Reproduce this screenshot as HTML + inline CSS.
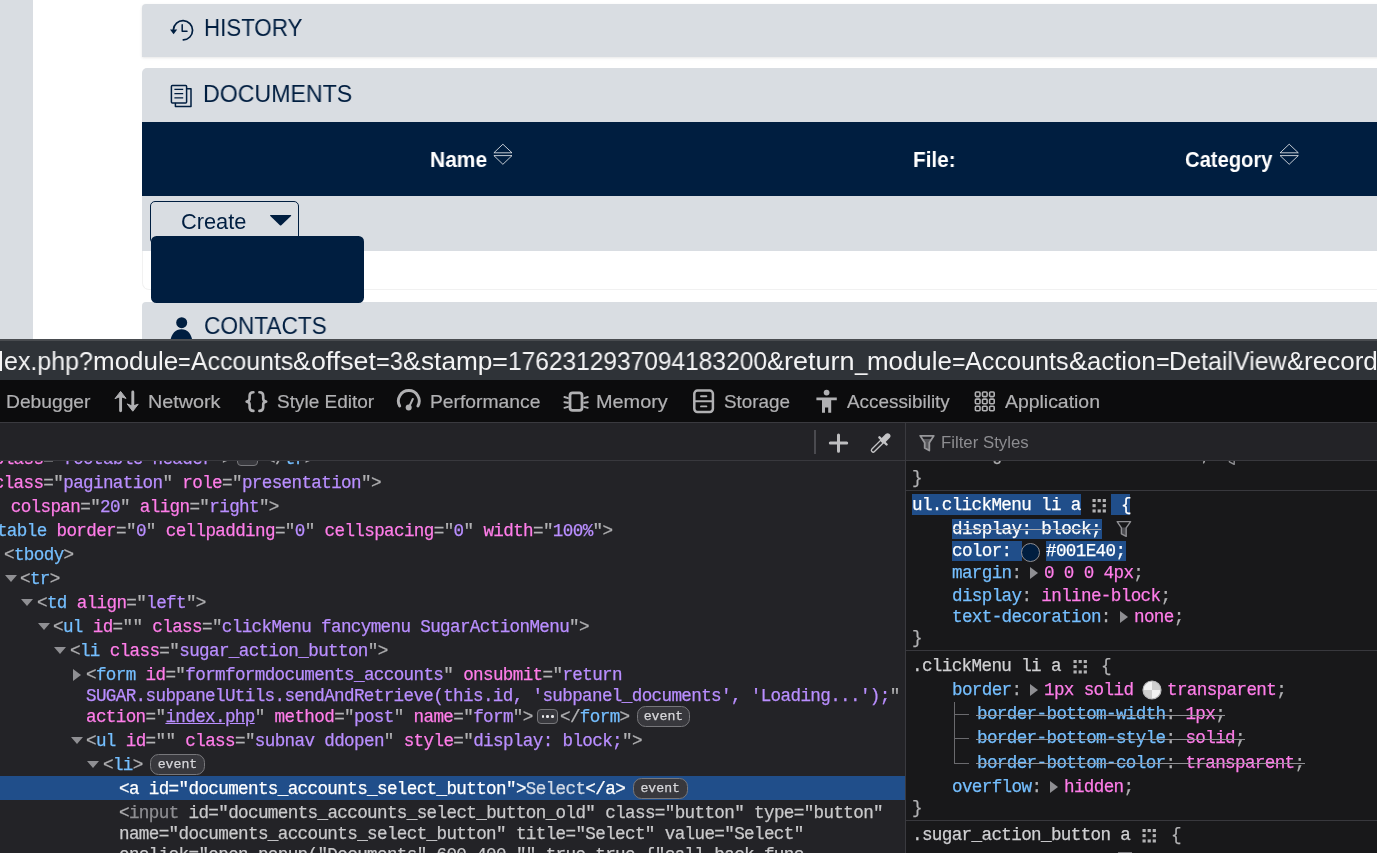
<!DOCTYPE html>
<html>
<head>
<meta charset="utf-8">
<title>Accounts - DevTools</title>
<style>
html,body{margin:0;padding:0;}
body{width:1377px;height:853px;overflow:hidden;position:relative;background:#fff;font-family:"Liberation Sans",sans-serif;}
.abs{position:absolute;}
svg{position:absolute;overflow:visible;}
#page{position:absolute;left:0;top:0;width:1377px;height:339px;background:#fff;overflow:hidden;}
#strip{position:absolute;left:0;top:0;width:33px;height:339px;background:#d9dde2;}
.panel{position:absolute;left:142px;width:1240px;background:#d9dde2;}
.tx{position:absolute;white-space:nowrap;transform-origin:0 0;will-change:transform;}
.ptitle{color:#001e40;font-size:23.5px;line-height:28px;}
.th{color:#fff;font-weight:bold;font-size:22px;line-height:26px;}
#dt{position:absolute;left:0;top:339px;width:1377px;height:514px;background:#232327;overflow:hidden;}
#url{position:absolute;left:0;top:0;width:1377px;height:41px;background:#2f3338;overflow:hidden;box-sizing:border-box;border-top:2px solid #494c50;}
#url .tx{top:4.6px;color:#f4f4f5;font-size:25.2px;line-height:30px;}
#tabs{position:absolute;left:0;top:41px;width:1377px;height:42px;background:#0c0c0d;border-bottom:1.5px solid #3a3a3f;}
#tabs .tx{top:10.6px;color:#b1b1b3;font-size:18.6px;line-height:22px;-webkit-text-stroke:0.2px #b1b1b3;}
#tb{position:absolute;left:0;top:84.5px;width:1377px;height:36.5px;background:#232327;border-bottom:1px solid #38383d;}
#mk{position:absolute;left:0;top:122px;width:905px;height:392px;background:#232327;overflow:hidden;}
#rv{position:absolute;left:906px;top:122px;width:471px;height:392px;background:#18181a;overflow:hidden;}
#mk,#rv{font-family:"Liberation Mono",monospace;font-size:17.6px;line-height:21px;color:#b1b1b3;white-space:pre;letter-spacing:-0.636px;-webkit-text-stroke:0.25px currentColor;}
#split{position:absolute;left:904.6px;top:84px;width:1.6px;height:431px;background:#3a3a3f;}
.l{position:absolute;height:21px;white-space:pre;will-change:transform;}
.t{color:#75bfff;} .n{color:#ff7de9;} .v{color:#b98eff;} .g{color:#b1b1b3;} .d{color:#8f8f93;} .lg{color:#c9c9cb;}
.sel{position:absolute;left:0;width:905px;height:24px;background:#204e8a;}
.w,.w *{color:#fff !important;}
.ev{position:absolute;will-change:transform;box-sizing:border-box;height:21px;border:1px solid #77777b;border-radius:8.5px;background:#38383d;color:#d7d7db;font-size:13.2px;line-height:19px;text-align:center;letter-spacing:0;}
.pn{color:#75bfff;} .pv{color:#ff7de9;} .sl{color:#d0d0d3;}
.hl{position:absolute;background:#204e8a;height:20px;}
.sep{position:absolute;left:0;width:471px;height:1px;background:#38383d;}
.strike{position:absolute;height:1px;background:#9a9a9d;}
.tw{position:absolute;width:0;height:0;border-style:solid;}
</style>
</head>
<body>
<div id="page">
<div id="strip"></div>
<div class="panel" style="top:4px;height:53px;border-radius:4px 0 0 0;box-shadow:0 1px 3px rgba(0,0,0,0.10);"></div>
<div class="tx ptitle" style="left:203.8px;top:14.2px;transform:scaleX(0.949);">HISTORY</div>
<div class="panel" style="top:68px;height:183px;border-radius:5px 0 0 0;"></div>
<div class="tx ptitle" style="left:203.4px;top:79.6px;transform:scaleX(0.985);">DOCUMENTS</div>
<div class="abs" style="left:142px;top:122px;width:1240px;height:74px;background:#001e40;"></div>
<div class="tx th" style="left:430.2px;top:147.0px;transform:scaleX(0.953);">Name</div>
<div class="tx th" style="left:913.2px;top:147.4px;transform:scaleX(0.94);">File:</div>
<div class="tx th" style="left:1185.4px;top:147.2px;transform:scaleX(0.918);">Category</div>
<svg style="left:0;top:0" width="1377" height="339" viewBox="0 0 1377 339" fill="none" stroke="rgba(255,255,255,0.85)" stroke-width="0.9" stroke-linejoin="miter"><path d="M493.9 152.8 L502.9 144.2 L512.0 152.8 Z M493.9 155.6 L512.0 155.6 L502.9 164.3 Z"/><path d="M1280.1 152.8 L1289.2 144.2 L1298.3 152.8 Z M1280.1 155.6 L1298.3 155.6 L1289.2 164.3 Z"/></svg>
<div class="abs" style="left:142px;top:251px;width:1240px;height:39px;box-sizing:border-box;background:#fff;border-left:1px solid #f1f1f1;border-bottom:1px solid #f1f1f1;border-radius:0 0 0 7px;"></div>
<div class="abs" style="left:150px;top:201px;width:149px;height:43px;box-sizing:border-box;border:1.4px solid #001e40;border-radius:5px;"></div>
<div class="tx" style="left:180.8px;top:209.4px;color:#001e40;font-size:21.8px;line-height:26px;transform:scaleX(1.0);">Create</div>
<svg style="left:0;top:0" width="400" height="339" viewBox="0 0 400 339"><path d="M270.4 214.9 H290.9 Q291.6 215.2 291 215.9 L281.3 225.2 Q280.6 225.7 279.9 225.2 L270.3 215.9 Q269.7 215.2 270.4 214.9 Z" fill="#001e40"/></svg>
<div class="panel" style="top:302px;height:60px;border-radius:4px 0 0 0;"></div>
<div class="tx ptitle" style="left:204.0px;top:312.2px;transform:scaleX(0.963);">CONTACTS</div>
<div class="abs" style="left:151.3px;top:236.3px;width:213.2px;height:66.7px;background:#001e40;border-radius:5.5px;"></div>
<svg style="left:0;top:0" width="400" height="339" viewBox="0 0 400 339" fill="none" stroke="#001e40" stroke-width="1.7" stroke-linecap="round" stroke-linejoin="round">
<path d="M173.4 29.6 A9.6 9.6 0 1 1 183.3 39.9"/>
<path d="M182.2 24.8 V31.2 H187" stroke-width="1.5"/>
<path d="M170 29.6 H177.2 L173.6 34.3 Z" fill="#001e40" stroke="none"/>
<!-- documents icon -->
<rect x="171.4" y="85.4" width="15.2" height="17.6" rx="1" stroke-width="1.5"/>
<path d="M187.2 88.8 H191 V106.6 H175.4 V103.6" stroke-width="1.5"/>
<path d="M174.4 89.4 H183.2 M174.4 93.6 H183.2 M174.4 97.9 H183.2" stroke-width="1.4" stroke-linecap="butt"/>
<!-- person icon -->
<circle cx="181.7" cy="322.7" r="5.5" fill="#001e40" stroke="none"/>
<path d="M170.3 341 C171.5 333.5 175.5 329.3 181.5 329.3 C187.4 329.3 191.2 333.5 192.4 341 Z" fill="#001e40" stroke="none"/>
</svg>
</div>
<div id="dt">
<div id="url">
<div class="tx" style="left:4.2px;transform:scaleX(0.993);">ex.php?</div>
<div class="tx" style="left:93.2px;transform:scaleX(1.031);">module</div>
<div class="tx" style="left:178.4px;transform:scaleX(0.856);">=</div>
<div class="tx" style="left:191.0px;transform:scaleX(0.987);">Accounts</div>
<div class="tx" style="left:293.3px;transform:scaleX(1.047);">&amp;</div>
<div class="tx" style="left:310.9px;transform:scaleX(1.061);">offset</div>
<div class="tx" style="left:375.8px;transform:scaleX(0.937);">=3</div>
<div class="tx" style="left:402.7px;transform:scaleX(1.059);">&amp;</div>
<div class="tx" style="left:420.5px;transform:scaleX(1.041);">stamp</div>
<div class="tx" style="left:491.9px;transform:scaleX(1.080);">=</div>
<div class="tx" style="left:507.8px;transform:scaleX(0.973);">1762312937094183200</div>
<div class="tx" style="left:766.7px;transform:scaleX(1.029);">&amp;</div>
<div class="tx" style="left:784.0px;transform:scaleX(1.073);">return</div>
<div class="tx" style="left:854.6px;transform:scaleX(0.892);">_</div>
<div class="tx" style="left:867.1px;transform:scaleX(1.028);">module</div>
<div class="tx" style="left:952.0px;transform:scaleX(0.904);">=</div>
<div class="tx" style="left:965.3px;transform:scaleX(0.997);">Accounts</div>
<div class="tx" style="left:1068.6px;transform:scaleX(1.095);">&amp;</div>
<div class="tx" style="left:1087.0px;transform:scaleX(1.021);">action</div>
<div class="tx" style="left:1155.6px;transform:scaleX(0.924);">=</div>
<div class="tx" style="left:1169.2px;transform:scaleX(0.993);">DetailView</div>
<div class="tx" style="left:1286.9px;transform:scaleX(1.029);">&amp;</div>
<div class="tx" style="left:1304.2px;transform:scaleX(1.034);">record</div>
<div class="abs" style="left:0;top:9.6px;width:1.8px;height:20px;background:#f4f4f5;"></div>
</div>
<div id="tabs">
<div class="tx" style="left:5.6px;transform:scaleX(1.034);">Debugger</div>
<div class="tx" style="left:147.7px;transform:scaleX(1.063);">Network</div>
<div class="tx" style="left:276.7px;transform:scaleX(1.021);">Style Editor</div>
<div class="tx" style="left:429.6px;transform:scaleX(1.037);">Performance</div>
<div class="tx" style="left:596.2px;transform:scaleX(1.068);">Memory</div>
<div class="tx" style="left:724.4px;transform:scaleX(1.015);">Storage</div>
<div class="tx" style="left:847.0px;transform:scaleX(1.015);">Accessibility</div>
<div class="tx" style="left:1005.4px;transform:scaleX(1.044);">Application</div>
<svg style="left:0;top:0" width="1377" height="41" viewBox="0 380 1377 41" fill="none" stroke="#b1b1b3" stroke-width="2.2" stroke-linecap="round" stroke-linejoin="round">
<!-- network -->
<path d="M120.6 395 V410.8 M132.8 392 V407.5" stroke-width="2.9"/>
<path d="M115.2 398.4 L120.6 391.4 L126 398.4 L121.8 397 H119.4 Z M127.4 404.2 L132.8 411.2 L138.2 404.2 L134 405.6 H131.6 Z" fill="#b1b1b3" stroke-width="1"/>
<!-- braces -->
<path d="M253.4 392.3 Q249.6 392.3 249.6 396 V398.6 Q249.6 401.4 246.6 401.6 Q249.6 401.8 249.6 404.6 V407.2 Q249.6 410.9 253.4 410.9" stroke-width="2.6"/>
<path d="M259.4 392.3 Q263.2 392.3 263.2 396 V398.6 Q263.2 401.4 266.2 401.6 Q263.2 401.8 263.2 404.6 V407.2 Q263.2 410.9 259.4 410.9" stroke-width="2.6"/>
<!-- performance -->
<path d="M399.7 406 A10.4 10.4 0 1 1 417.9 406" stroke-width="2.9"/>
<path d="M412.8 399 L409.2 406.6" stroke-width="2"/>
<circle cx="408.7" cy="407.6" r="3" fill="#b1b1b3" stroke="none"/>
<!-- memory -->
<rect x="570" y="392.8" width="12" height="17.6" rx="2.6" stroke-width="2.8"/>
<path d="M564.4 397 L568 398.2 M564.4 402.2 L568 402.8 M564.4 407.8 L568 406.8 M587.8 397 L584.2 398.2 M587.8 402.2 L584.2 402.8 M587.8 407.8 L584.2 406.8" stroke-width="1.9"/>
<!-- storage -->
<rect x="694.3" y="390.6" width="18.6" height="21.4" rx="3.2" stroke-width="2.5"/>
<path d="M694.3 401.3 H712.7" stroke-width="1.9"/>
<path d="M701 396.2 H706.4 M701 406.4 H706.4" stroke-width="1.9"/>
<!-- accessibility -->
<circle cx="826.6" cy="392.6" r="2.9" fill="#b1b1b3" stroke="none"/>
<path d="M816.4 397.6 H836.8 V400.2 H831.2 V412.8 H828.2 V407.4 H825 V412.8 H822 V400.2 H816.4 Z" fill="#b1b1b3" stroke="none"/>
<!-- application grid -->
<g stroke-width="1.6">
<rect x="975.4" y="392" width="4.6" height="4.6" rx="1"/><rect x="982.5" y="392" width="4.6" height="4.6" rx="1"/><rect x="989.6" y="392" width="4.6" height="4.6" rx="1"/>
<rect x="975.4" y="399.1" width="4.6" height="4.6" rx="1"/><rect x="982.5" y="399.1" width="4.6" height="4.6" rx="1"/><rect x="989.6" y="399.1" width="4.6" height="4.6" rx="1"/>
<rect x="975.4" y="406.2" width="4.6" height="4.6" rx="1"/><rect x="982.5" y="406.2" width="4.6" height="4.6" rx="1"/><rect x="989.6" y="406.2" width="4.6" height="4.6" rx="1"/>
</g>
</svg>
</div>
<div id="tb">
<div class="abs" style="left:814.3px;top:6.5px;width:1.9px;height:24px;background:#4a4a4f;"></div>
<svg style="left:0;top:0" width="1377" height="38" viewBox="0 423.5 1377 38" fill="none" stroke="#c8c8ca" stroke-width="2" stroke-linecap="round" stroke-linejoin="round">
<path d="M838.5 434.4 V450.8 M830.3 442.6 H846.7" stroke="#bebec0" stroke-width="3"/>
<!-- eyedropper -->
<path d="M873.2 449.8 L882.6 440.4" stroke="#c4c4c6" stroke-width="5"/>
<path d="M873.2 449.8 L883.4 439.6" stroke="#232327" stroke-width="2.3"/>
<path d="M879.4 436.8 L886.6 444" stroke="#c4c4c6" stroke-width="2.4"/>
<path d="M883.4 439.8 L887.6 435.6" stroke="#c4c4c6" stroke-width="5.6"/>
<!-- filter funnel -->
<path d="M922.6 438.4 H931.4 L929.2 442.2 V449.8 L924.8 447.4 V442.2 Z" fill="#57575b" stroke="none"/><path d="M920.2 435.3 H933.8 L929.3 442.2 V450 L924.7 447.5 V442.2 Z" stroke="#97979a" stroke-width="1.8"/>
</svg>
<div class="tx" style="left:941.2px;top:8.2px;color:#8c8c90;font-size:16.8px;line-height:22px;transform:scaleX(0.995);">Filter Styles</div>
</div>
<div id="mk">
<div class="l " style="left:-45.8px;top:-12.4px;"><span class="g">&lt;</span><span class="t">tr</span> <span class="n">class</span><span class="g">=&quot;</span><span class="v">footable-header</span><span class="g">&quot;</span><span class="g">&gt;</span></div>
<div class="l " style="left:264.6px;top:-12.4px;"><span class="g">&lt;/</span><span class="t">tr</span><span class="g">&gt;</span></div>
<div class="ev" style="left:236.5px;top:-10.0px;width:21px;height:15px;border-radius:4px;"></div>
<div class="l " style="left:-45.8px;top:11.6px;"><span class="g">&lt;</span><span class="t">tr</span> <span class="n">class</span><span class="g">=&quot;</span><span class="v">pagination</span><span class="g">&quot;</span> <span class="n">role</span><span class="g">=&quot;</span><span class="v">presentation</span><span class="g">&quot;</span><span class="g">&gt;</span></div>
<div class="l " style="left:-29.3px;top:35.6px;"><span class="g">&lt;</span><span class="t">td</span> <span class="n">colspan</span><span class="g">=&quot;</span><span class="v">20</span><span class="g">&quot;</span> <span class="n">align</span><span class="g">=&quot;</span><span class="v">right</span><span class="g">&quot;</span><span class="g">&gt;</span></div>
<div class="l " style="left:-12.8px;top:59.6px;"><span class="g">&lt;</span><span class="t">table</span> <span class="n">border</span><span class="g">=&quot;</span><span class="v">0</span><span class="g">&quot;</span> <span class="n">cellpadding</span><span class="g">=&quot;</span><span class="v">0</span><span class="g">&quot;</span> <span class="n">cellspacing</span><span class="g">=&quot;</span><span class="v">0</span><span class="g">&quot;</span> <span class="n">width</span><span class="g">=&quot;</span><span class="v">100%</span><span class="g">&quot;</span><span class="g">&gt;</span></div>
<div class="l " style="left:3.7px;top:83.6px;"><span class="g">&lt;</span><span class="t">tbody</span><span class="g">&gt;</span></div>
<div class="tw" style="left:4.5px;top:113.6px;border-width:7.8px 6px 0 6px;border-color:#8f8f93 transparent transparent transparent;"></div>
<div class="l " style="left:20.2px;top:107.6px;"><span class="g">&lt;</span><span class="t">tr</span><span class="g">&gt;</span></div>
<div class="tw" style="left:21.0px;top:137.6px;border-width:7.8px 6px 0 6px;border-color:#8f8f93 transparent transparent transparent;"></div>
<div class="l " style="left:36.7px;top:131.6px;"><span class="g">&lt;</span><span class="t">td</span> <span class="n">align</span><span class="g">=&quot;</span><span class="v">left</span><span class="g">&quot;</span><span class="g">&gt;</span></div>
<div class="tw" style="left:37.5px;top:161.6px;border-width:7.8px 6px 0 6px;border-color:#8f8f93 transparent transparent transparent;"></div>
<div class="l " style="left:53.2px;top:155.6px;"><span class="g">&lt;</span><span class="t">ul</span> <span class="n">id</span><span class="g">=&quot;</span><span class="v"></span><span class="g">&quot;</span> <span class="n">class</span><span class="g">=&quot;</span><span class="v">clickMenu fancymenu SugarActionMenu</span><span class="g">&quot;</span><span class="g">&gt;</span></div>
<div class="tw" style="left:54.0px;top:185.6px;border-width:7.8px 6px 0 6px;border-color:#8f8f93 transparent transparent transparent;"></div>
<div class="l " style="left:69.7px;top:179.6px;"><span class="g">&lt;</span><span class="t">li</span> <span class="n">class</span><span class="g">=&quot;</span><span class="v">sugar_action_button</span><span class="g">&quot;</span><span class="g">&gt;</span></div>
<div class="tw" style="left:73.2px;top:207.7px;border-width:6.3px 0 6.3px 8.2px;border-color:transparent transparent transparent #8f8f93;"></div>
<div class="l " style="left:86.2px;top:203.6px;"><span class="g">&lt;</span><span class="t">form</span> <span class="n">id</span><span class="g">=&quot;</span><span class="v">formformdocuments_accounts</span><span class="g">&quot;</span> <span class="n">onsubmit</span><span class="g">=&quot;</span><span class="v">return</span></div>
<div class="l " style="left:86.2px;top:224.6px;"><span class="v">SUGAR.subpanelUtils.sendAndRetrieve(this.id, &#x27;subpanel_documents&#x27;, &#x27;Loading...&#x27;);</span><span class="g">&quot;</span></div>
<div class="l " style="left:86.2px;top:245.6px;"><span class="n">action</span><span class="g">=&quot;</span><span class="v" style="text-decoration:underline;">index.php</span><span class="g">&quot;</span> <span class="n">method</span><span class="g">=&quot;</span><span class="v">post</span><span class="g">&quot;</span> <span class="n">name</span><span class="g">=&quot;</span><span class="v">form</span><span class="g">&quot;</span><span class="g">&gt;</span></div>
<div class="l " style="left:560.0px;top:245.6px;"><span class="g">&lt;/</span><span class="t">form</span><span class="g">&gt;</span></div>
<div class="tw" style="left:70.5px;top:275.6px;border-width:7.8px 6px 0 6px;border-color:#8f8f93 transparent transparent transparent;"></div>
<div class="l " style="left:86.2px;top:269.6px;"><span class="g">&lt;</span><span class="t">ul</span> <span class="n">id</span><span class="g">=&quot;</span><span class="v"></span><span class="g">&quot;</span> <span class="n">class</span><span class="g">=&quot;</span><span class="v">subnav ddopen</span><span class="g">&quot;</span> <span class="n">style</span><span class="g">=&quot;</span><span class="v">display: block;</span><span class="g">&quot;</span><span class="g">&gt;</span></div>
<div class="tw" style="left:87.0px;top:299.6px;border-width:7.8px 6px 0 6px;border-color:#8f8f93 transparent transparent transparent;"></div>
<div class="l " style="left:102.7px;top:293.6px;"><span class="g">&lt;</span><span class="t">li</span><span class="g">&gt;</span></div>
<div class="sel" style="top:315px;"></div>
<div class="l w" style="left:119.2px;top:317.6px;">&lt;a id=&quot;documents_accounts_select_button&quot;&gt;<span style="color:#d2dae6 !important;">Select</span>&lt;/a&gt;</div>
<div class="l " style="left:119.2px;top:341.6px;"><span class="g">&lt;</span><span class="d">input</span><span class="lg"> id=&quot;documents_accounts_select_button_old&quot; class=&quot;button&quot; type=&quot;button&quot;</span></div>
<div class="l " style="left:119.2px;top:362.6px;"><span class="lg">name=&quot;documents_accounts_select_button&quot; title=&quot;Select&quot; value=&quot;Select&quot;</span></div>
<div class="l " style="left:119.2px;top:383.6px;"><span class="lg">onclick=&quot;open_popup(&quot;Documents&quot;,600,400,&quot;&quot;,true,true,{&quot;call_back_func</span></div>
<div class="ev" style="left:537px;top:248.0px;width:21px;height:15px;border-radius:4px;"></div>
<div class="abs" style="left:541.6px;top:254.3px;width:2.6px;height:2.6px;border-radius:1.3px;background:#e8e8ea;"></div>
<div class="abs" style="left:546.4px;top:254.3px;width:2.6px;height:2.6px;border-radius:1.3px;background:#e8e8ea;"></div>
<div class="abs" style="left:551.2px;top:254.3px;width:2.6px;height:2.6px;border-radius:1.3px;background:#e8e8ea;"></div>
<div class="ev" style="left:636.5px;top:245.0px;width:53px;">event</div>
<div class="ev" style="left:149.5px;top:293.0px;width:55px;">event</div>
<div class="ev" style="left:632.5px;top:317.0px;width:54.5px;">event</div>
</div>
<div id="rv">
<div class="l " style="left:46.2px;top:-16.5px;"><span class="g">background: none 0 0 auto;</span></div>
<svg style="left:318.4px;top:-13.4px" width="17" height="18" viewBox="0 0 17 18" fill="none" stroke="#8f8f93" stroke-width="1.4" stroke-linejoin="round"><path d="M1.2 1.6 H14.6 L10.2 7.8 V16.4 L5.4 13.8 V7.8 Z"/></svg>
<div class="l " style="left:6.0px;top:6.6px;"><span class="g">}</span></div>
<div class="sep" style="top:29px;"></div>
<div class="hl" style="left:6.0px;top:33.2px;width:169.1px;height:20.5px;"></div>
<div class="l w" style="left:6.0px;top:34.1px;">ul.clickMenu li a</div>
<svg style="left:186.3px;top:38.1px" width="15" height="14" viewBox="0 0 15 14" fill="#b1b1b3"><rect x="0.5" y="0.0" width="3.2" height="3.1"/><rect x="0.5" y="5.1" width="3.2" height="3.1"/><rect x="0.5" y="10.4" width="3.2" height="3.1"/><rect x="5.6" y="0.0" width="3.2" height="3.1"/><rect x="5.6" y="10.4" width="3.2" height="3.1"/><rect x="10.7" y="0.0" width="3.2" height="3.1"/><rect x="10.7" y="5.1" width="3.2" height="3.1"/><rect x="10.7" y="10.4" width="3.2" height="3.1"/></svg>
<div class="hl" style="left:205.0px;top:33.2px;width:19.0px;height:20.5px;"></div>
<div class="l w" style="left:205.0px;top:34.1px;"> {</div>
<div class="hl" style="left:46.2px;top:58.0px;width:149.8px;height:20.0px;"></div>
<div class="l w" style="left:46.2px;top:58.1px;">display: block;</div>
<div class="strike" style="left:47.2px;top:67.8px;width:147.8px;background:#a4a7ad;"></div>
<svg style="left:210.4px;top:59.2px" width="17" height="18" viewBox="0 0 17 18" fill="none" stroke="#8f8f93" stroke-width="1.4" stroke-linejoin="round"><path d="M5.2 7.6 H10.2 V16 L5.2 13.6 Z" fill="#4a4a4e" stroke="none"/><path d="M1.2 1.6 H14.6 L10.2 7.8 V16.4 L5.4 13.8 V7.8 Z"/></svg>
<div class="hl" style="left:46.2px;top:80.0px;width:69.9px;height:20.0px;"></div>
<div class="l w" style="left:46.2px;top:80.1px;">color: </div>
<div class="abs" style="left:115.2px;top:81.6px;width:19px;height:19px;box-sizing:border-box;border-radius:50%;border:1.7px solid #8e8e92;background:#001e40;"></div>
<div class="hl" style="left:140.0px;top:80.0px;width:80.4px;height:20.0px;"></div>
<div class="l w" style="left:140.2px;top:80.1px;">#001E40;</div>
<div class="l " style="left:46.2px;top:102.1px;"><span class="pn">margin</span><span class="g">: </span></div>
<div class="tw" style="left:124.4px;top:105.9px;border-width:6.3px 0 6.3px 8.2px;border-color:transparent transparent transparent #8f8f93;"></div>
<div class="l " style="left:138.3px;top:102.1px;"><span class="pv">0 0 0 4px</span><span class="g">;</span></div>
<div class="l " style="left:46.2px;top:124.5px;"><span class="pn">display</span><span class="g">: </span><span class="pv">inline-block</span><span class="g">;</span></div>
<div class="l " style="left:46.2px;top:146.1px;"><span class="pn">text-decoration</span><span class="g">: </span></div>
<div class="tw" style="left:213.6px;top:149.9px;border-width:6.3px 0 6.3px 8.2px;border-color:transparent transparent transparent #8f8f93;"></div>
<div class="l " style="left:227.6px;top:146.1px;"><span class="pv">none</span><span class="g">;</span></div>
<div class="l " style="left:6.0px;top:167.1px;"><span class="g">}</span></div>
<div class="sep" style="top:189px;"></div>
<div class="l " style="left:6.0px;top:194.6px;"><span class="sl">.clickMenu li a</span></div>
<svg style="left:166.6px;top:198.5px" width="15" height="14" viewBox="0 0 15 14" fill="#b1b1b3"><rect x="0.5" y="0.0" width="3.2" height="3.1"/><rect x="0.5" y="5.1" width="3.2" height="3.1"/><rect x="0.5" y="10.4" width="3.2" height="3.1"/><rect x="5.6" y="0.0" width="3.2" height="3.1"/><rect x="5.6" y="10.4" width="3.2" height="3.1"/><rect x="10.7" y="0.0" width="3.2" height="3.1"/><rect x="10.7" y="5.1" width="3.2" height="3.1"/><rect x="10.7" y="10.4" width="3.2" height="3.1"/></svg>
<div class="l " style="left:195.0px;top:194.6px;"><span class="g">{</span></div>
<div class="l " style="left:46.2px;top:219.1px;"><span class="pn">border</span><span class="g">: </span></div>
<div class="tw" style="left:124.4px;top:222.9px;border-width:6.3px 0 6.3px 8.2px;border-color:transparent transparent transparent #8f8f93;"></div>
<div class="l " style="left:138.3px;top:219.1px;"><span class="pv">1px solid</span></div>
<div class="l " style="left:260.6px;top:219.1px;"><span class="pv">transparent</span><span class="g">;</span></div>
<svg style="left:235.6px;top:219.0px" width="20" height="20" viewBox="0 0 20 20"><circle cx="10" cy="10" r="9" fill="#f2f2f2"/><path d="M10 1 A9 9 0 0 1 19 10 H10 Z M10 19 A9 9 0 0 1 1 10 H10 Z" fill="#cfcfcf"/><circle cx="10" cy="10" r="9" fill="none" stroke="#b8b8ba" stroke-width="1.2"/></svg>
<div class="abs" style="left:48.2px;top:240.5px;width:1px;height:61.0px;background:#6a6a6e;"></div>
<div class="abs" style="left:48.2px;top:253.0px;width:15px;height:1px;background:#6a6a6e;"></div>
<div class="l " style="left:71.2px;top:243.1px;"><span class="pn">border-bottom-width</span><span class="g">: </span><span class="pv">1px</span><span class="g">;</span></div>
<div class="strike" style="left:70.2px;top:253.6px;width:249.0px;background:#8f8f93;"></div>
<div class="abs" style="left:48.2px;top:277.0px;width:15px;height:1px;background:#6a6a6e;"></div>
<div class="l " style="left:71.2px;top:267.1px;"><span class="pn">border-bottom-style</span><span class="g">: </span><span class="pv">solid</span><span class="g">;</span></div>
<div class="strike" style="left:70.2px;top:277.6px;width:268.8px;background:#8f8f93;"></div>
<div class="abs" style="left:48.2px;top:301.5px;width:15px;height:1px;background:#6a6a6e;"></div>
<div class="l " style="left:71.2px;top:291.6px;"><span class="pn">border-bottom-color</span><span class="g">: </span><span class="pv">transparent</span><span class="g">;</span></div>
<div class="strike" style="left:70.2px;top:302.1px;width:328.4px;background:#8f8f93;"></div>
<div class="l " style="left:46.2px;top:316.1px;"><span class="pn">overflow</span><span class="g">: </span></div>
<div class="tw" style="left:144.0px;top:319.9px;border-width:6.3px 0 6.3px 8.2px;border-color:transparent transparent transparent #8f8f93;"></div>
<div class="l " style="left:158.2px;top:316.1px;"><span class="pv">hidden</span><span class="g">;</span></div>
<div class="l " style="left:6.0px;top:337.1px;"><span class="g">}</span></div>
<div class="sep" style="top:359px;"></div>
<div class="l " style="left:6.0px;top:364.1px;"><span class="sl">.sugar_action_button a</span></div>
<svg style="left:236.0px;top:368.0px" width="15" height="14" viewBox="0 0 15 14" fill="#b1b1b3"><rect x="0.5" y="0.0" width="3.2" height="3.1"/><rect x="0.5" y="5.1" width="3.2" height="3.1"/><rect x="0.5" y="10.4" width="3.2" height="3.1"/><rect x="5.6" y="0.0" width="3.2" height="3.1"/><rect x="5.6" y="10.4" width="3.2" height="3.1"/><rect x="10.7" y="0.0" width="3.2" height="3.1"/><rect x="10.7" y="5.1" width="3.2" height="3.1"/><rect x="10.7" y="10.4" width="3.2" height="3.1"/></svg>
<div class="l " style="left:264.6px;top:364.1px;"><span class="g">{</span></div>
<div class="abs" style="left:211.6px;top:390.8px;width:14px;height:1.2px;background:#7a7a7e;"></div>
</div>
<div id="split"></div>
</div>
</body>
</html>
